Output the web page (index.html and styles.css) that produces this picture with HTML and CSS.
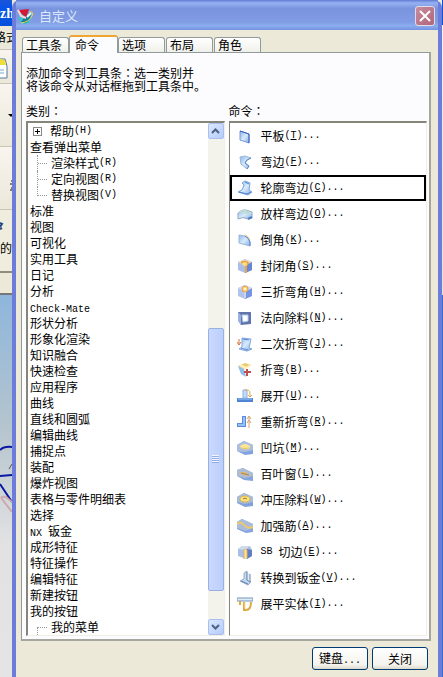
FILE: index.html
```
<!DOCTYPE html>
<html lang="zh-CN">
<head>
<meta charset="utf-8">
<meta name="viewport" content="width=device-width, initial-scale=1">
<title>自定义</title>
<link rel="stylesheet" href="styles.css">
</head>
<body>

<!-- edge of the application window behind the dialog -->
<div class="backdrop">
  <div class="back-title">zh</div>
  <div class="back-menu">格式</div>
  <div class="back-tool">
    <svg width="12" height="34" viewBox="0 0 12 34">
      <path d="M0 10H5V27H0Z" fill="#b9d3ee"/>
      <path d="M0 9L5 9L7 16V28H0" fill="#fff" stroke="#54799e"/>
      <path d="M0 9L5 10L6 15H0Z" fill="#f0dd35"/>
      <path d="M0 20H4M0 23H4" stroke="#79a4ca"/>
    </svg>
  </div>
  <div class="back-tool back-drop">
    <svg width="12" height="63" viewBox="0 0 12 63"><path d="M8 30H14L11 33Z" fill="#000"/></svg>
  </div>
  <div class="back-tool back-empty">
    <svg width="12" height="63" viewBox="0 0 12 63"><path d="M11 34H12M10 37H12M11 41H12M10 43H12" stroke="#111"/></svg>
  </div>
  <div class="back-label">
    <svg width="12" height="30" viewBox="0 0 12 30"><path d="M0 13L2 14L0 17M0 19L2 18" stroke="#234a80" stroke-width="2" fill="none"/></svg>
    <span>的</span>
  </div>
  <div class="back-base"></div>
  <div class="back-canvas">
    <svg width="12" height="230" viewBox="0 0 12 230">
      <path d="M0 157Q4 153 12 154M0 183L12 182M0 191L12 209" stroke="#0718a2" stroke-width="2" fill="none"/>
      <path d="M9 176L12 171" stroke="#555"/>
      <path d="M12 219L2 206Q0 203 6 204L12 209" stroke="#cda9af" stroke-width="2" fill="none"/>
    </svg>
  </div>
</div>

<main class="dialog">
  <header class="titlebar">
    <svg class="logo" width="17" height="17" viewBox="0 0 17 17">
      <circle cx="8" cy="10" r="6" fill="#36c5ca"/>
      <path d="M4 14Q9 17 13 11L14 6L8 9Z" fill="#187d9b"/>
      <path d="M12 4Q17 3 15 8Q12 14 4 15" fill="none" stroke="#f4d34e"/>
      <path d="M1 2L12 1L9 10Z" fill="#d31936"/>
      <path d="M1 2L4 8L9 10" fill="none" stroke="#f8d5dc" stroke-width="2"/>
      <path d="M10 9L14 5" stroke="#e9ffff" stroke-width="2"/>
    </svg>
    <h1>自定义</h1>
    <button class="close" aria-label="关闭窗口">
      <svg width="12" height="12" viewBox="0 0 12 12"><path d="M1 1L11 11M11 1L1 11" stroke="#fff" stroke-width="2"/></svg>
    </button>
  </header>

  <div class="content">
    <div class="tabs" role="tablist">
      <button role="tab">工具条</button>
      <button role="tab" class="active" aria-selected="true">命令</button>
      <button role="tab">选项</button>
      <button role="tab">布局</button>
      <button role="tab">角色</button>
    </div>

    <section class="panel">
      <p class="hint">添加命令到工具条<span class="colon" lang="zh-TW">：</span>选一类别并<br>将该命令从对话框拖到工具条中。</p>

      <div class="lists">
        <h2>类别<span class="colon" lang="zh-TW">：</span></h2>
        <h2>命令<span class="colon" lang="zh-TW">：</span></h2>

        <div class="box categories">
          <ul class="tree">
            <li class="child parent"><i class="plus"></i>帮助<span class="en">(H)</span></li>
            <li>查看弹出菜单</li>
            <li class="child">渲染样式<span class="en">(R)</span></li>
            <li class="child">定向视图<span class="en">(R)</span></li>
            <li class="child last">替换视图<span class="en">(V)</span></li>
            <li>标准</li>
            <li>视图</li>
            <li>可视化</li>
            <li>实用工具</li>
            <li>日记</li>
            <li>分析</li>
            <li><span class="en">Check-Mate</span></li>
            <li>形状分析</li>
            <li>形象化渲染</li>
            <li>知识融合</li>
            <li>快速检查</li>
            <li>应用程序</li>
            <li>曲线</li>
            <li>直线和圆弧</li>
            <li>编辑曲线</li>
            <li>捕捉点</li>
            <li>装配</li>
            <li>爆炸视图</li>
            <li>表格与零件明细表</li>
            <li>选择</li>
            <li><span class="en">NX </span>钣金</li>
            <li>成形特征</li>
            <li>特征操作</li>
            <li>编辑特征</li>
            <li>新建按钮</li>
            <li>我的按钮</li>
            <li class="child first">我的菜单</li>
          </ul>
          <div class="scrollbar">
            <button aria-label="向上滚动"><svg width="9" height="6" viewBox="0 0 9 6"><path d="M1 5L4.500 1.500L8 5" fill="none" stroke="#4d6185" stroke-width="2"/></svg></button>
            <div class="track"><div class="thumb"><i></i></div></div>
            <button aria-label="向下滚动"><svg width="9" height="6" viewBox="0 0 9 6"><path d="M1 1L4.500 4.500L8 1" fill="none" stroke="#4d6185" stroke-width="2"/></svg></button>
          </div>
        </div>

        <ul class="box commands">
          <li>
            <svg viewBox="0 0 16 16"><path d="M3 3L12 6V15L3 12Z" fill="url(#sheet)" stroke="#6b91d8"/><path d="M3 3L12 6V15" fill="none" stroke="#2547b9"/></svg>
            平板<span class="en">(<u>T</u>)...</span></li>
          <li>
            <svg viewBox="0 0 16 16"><path d="M3 3L8 2L14 4L10 6L8 9L12 12L10 15L4 10Z" fill="url(#sheet)" stroke="#8fb0d4"/><path d="M14 4L10 6L8 9L12 12L10 15" fill="none" stroke="#427bc5"/></svg>
            弯边<span class="en">(<u>F</u>)...</span></li>
          <li class="selected">
            <svg viewBox="0 0 16 16"><path d="M5 3L8 1L13 3L12 10L15 12L11 15L1 12L5 10L7 5Z" fill="url(#sheet)" stroke="#6f9ddd"/><path d="M8 2L12 4M2 12L10 14L14 12" fill="none" stroke="#3972cd"/></svg>
            轮廓弯边<span class="en">(<u>C</u>)...</span></li>
          <li>
            <svg viewBox="0 0 16 16"><path d="M1 7Q5 3 9 4L15 6V12L11 13Q6 10 1 13Z" fill="url(#sheet)" stroke="#859fbb"/><path d="M1 7Q6 5 11 9L15 7L9 4Q4 3 1 7" fill="#b9d8d3"/><path d="M11 13L15 11" stroke="#3e6fc4" stroke-width="2"/></svg>
            放样弯边<span class="en">(<u>O</u>)...</span></li>
          <li>
            <svg viewBox="0 0 16 16"><path d="M2 3L8 4Q12 6 13 10V14L2 11Z" fill="url(#sheet)" stroke="#8eafd9"/><path d="M8 4Q12 6 13 10V14" fill="none" stroke="#406ed0"/><path d="M8 3Q12 4 13 8" fill="none" stroke="#e9cd77"/></svg>
            倒角<span class="en">(<u>K</u>)...</span></li>
          <li>
            <svg viewBox="0 0 16 16"><path d="M1 4L8 1L15 4V12L8 15L1 12Z" fill="#a3b7e6"/><path d="M1 4L8 1L15 4L8 8Z" fill="#dfdcd3"/><path d="M8 8L15 4V12L8 15Z" fill="#5679d7"/><path d="M4 5Q8 2 11 5L9 8V15" fill="none" stroke="#e99a2b" stroke-width="2"/><circle cx="8" cy="6" r="2" fill="#ffdc67"/></svg>
            封闭角<span class="en">(<u>S</u>)...</span></li>
          <li>
            <svg viewBox="0 0 16 16"><path d="M1 4L8 1L15 4V12L8 15L1 12Z" fill="#a9bdee"/><path d="M8 8L15 4V12L8 15Z" fill="#6689e3"/><path d="M1 4L8 1L15 4L8 8Z" fill="#d0d7e5"/><circle cx="8" cy="5" r="3" fill="#ffd467" stroke="#e1943e"/><circle cx="8" cy="5" r="1" fill="#fff"/><path d="M8 8V14" stroke="#cbd1d9" stroke-width="2"/></svg>
            三折弯角<span class="en">(<u>H</u>)...</span></li>
          <li>
            <svg viewBox="0 0 16 16"><path d="M1 2H14V14L4 15L1 10Z" fill="#5066a4"/><path d="M1 2L4 5V15L1 11Z" fill="#91a9dc"/><path d="M5 5H11V11L6 12Z" fill="#fff" stroke="#b1c4ed"/></svg>
            法向除料<span class="en">(<u>N</u>)...</span></li>
          <li>
            <svg viewBox="0 0 16 16"><path d="M5 2L14 3L12 12L15 13L10 15L2 13L5 11Z" fill="url(#sheet)" stroke="#6e9ede"/><path d="M2 3V9M0 6L2 9L4 6" fill="none" stroke="#d3682f"/><path d="M6 3L12 4M4 12L11 14" stroke="#4a7bd0"/></svg>
            二次折弯<span class="en">(<u>J</u>)...</span></li>
          <li>
            <svg viewBox="0 0 16 16"><path d="M1 4L8 1L14 3L7 7Z" fill="#eec361"/><path d="M1 4L7 7L9 15L4 12Z" fill="#82b8e8"/><path d="M3 3L9 6L14 3" fill="none" stroke="#fff2bd" stroke-width="2"/><path d="M10 7V14M7 10H14" stroke="#bb3c38" stroke-width="2"/></svg>
            折弯<span class="en">(<u>B</u>)...</span></li>
          <li>
            <svg viewBox="0 0 16 16"><path d="M0 10H16V14H0Z" fill="#3e76d0"/><path d="M1 11H15" stroke="#89c4fa"/><path d="M6 2H10V10H6Z" fill="#b6dafa" stroke="#86a6d7"/><path d="M8 2Q13 1 13 6V9M11 7L13 9L15 7" fill="none" stroke="#dda13b"/></svg>
            展开<span class="en">(<u>U</u>)...</span></li>
          <li>
            <svg viewBox="0 0 16 16"><path d="M0 9H5V2H9V13H0Z" fill="#4d7fdc"/><path d="M6 3H8V12H1V10H6Z" fill="#8abcf0"/><path d="M12 2V14M10 5L12 2L14 5M10 9L12 6L14 9" fill="none" stroke="#d39b62"/></svg>
            重新折弯<span class="en">(<u>R</u>)...</span></li>
          <li>
            <svg viewBox="0 0 16 16"><path d="M0 5L7 1L16 5V14L8 15L0 11Z" fill="#7599de"/><path d="M0 5L7 1L16 5V10L8 12L0 11Z" fill="#a4b9d9"/><path d="M3 6Q8 2 13 6L12 9Q7 10 4 8Z" fill="#ffe486"/><path d="M4 8Q8 9 12 8" stroke="#e8c15a" fill="none"/></svg>
            凹坑<span class="en">(<u>M</u>)...</span></li>
          <li>
            <svg viewBox="0 0 16 16"><path d="M0 4L6 2L16 7V15L7 14L0 10Z" fill="#799cdb"/><path d="M0 4L6 2L16 7V10L8 12L0 10Z" fill="#a5b6cf"/><path d="M2 6L8 6L14 10L6 9Z" fill="#e8b34e"/><path d="M4 7L12 9" stroke="#8d7a70"/></svg>
            百叶窗<span class="en">(<u>L</u>)...</span></li>
          <li>
            <svg viewBox="0 0 16 16"><path d="M0 5L7 1L16 5V14L8 15L0 11Z" fill="#7497d9"/><path d="M0 5L7 1L16 5V10L8 12L0 10Z" fill="#a1b4d2"/><ellipse cx="8" cy="7" rx="5" ry="3" fill="#ffe36f" stroke="#dfad39"/><path d="M6 7Q8 5 10 7" stroke="#8b681e" fill="none"/></svg>
            冲压除料<span class="en">(<u>W</u>)...</span></li>
          <li>
            <svg viewBox="0 0 16 16"><path d="M0 4L5 1L16 6V14L9 15L0 11Z" fill="#789bdd"/><path d="M0 4L5 1L16 6V10L9 13L0 10Z" fill="#a1b5d8"/><path d="M0 6Q4 3 7 7T16 9" fill="none" stroke="#edc35c" stroke-width="2"/></svg>
            加强筋<span class="en">(<u>A</u>)...</span></li>
          <li>
            <svg viewBox="0 0 16 16"><path d="M1 5L5 2L13 2L15 6V12L9 15L1 12Z" fill="#a0b8e6"/><path d="M1 5L5 2L13 2L8 6Z" fill="#cbd9e9"/><path d="M10 5L15 6V12L10 15Z" fill="#4f72bd"/><path d="M7 15V6Q9 3 10 7V14" fill="#ffe58f" stroke="#e6a542"/></svg>
            <span class="en">SB </span>切边<span class="en">(<u>E</u>)...</span></li>
          <li>
            <svg viewBox="0 0 16 16"><path d="M7 3L10 1V10L14 12L11 15L3 11L7 9Z" fill="#bdd4e8" stroke="#8fa5c4"/><path d="M10 2V10L13 12V4" fill="#dfeaf4" stroke="#5f7cab"/><path d="M4 11L11 14" stroke="#4a74b5"/></svg>
            转换到钣金<span class="en">(<u>V</u>)...</span></li>
          <li>
            <svg viewBox="0 0 16 16"><path d="M0 2H16V5H0Z" fill="#dce9f4" stroke="#698db9"/><path d="M3 5V9M7 6V14H9Q14 14 14 6" fill="none" stroke="#dba330" stroke-width="2"/><path d="M8 6V12" stroke="#ffe585"/></svg>
            展平实体<span class="en">(<u>I</u>)...</span></li>
        </ul>
      </div>
    </section>

    <footer class="actions">
      <button>键盘<span class="en">...</span></button>
      <button>关闭</button>
    </footer>
  </div>
</main>

<div class="right-edge"></div>

<!-- shared fill for the sheet metal icons -->
<svg class="defs" width="0" height="0">
  <linearGradient id="sheet" x1="0" y1="0" x2="1" y2="1">
    <stop offset="0" stop-color="#7facea"/>
    <stop offset="0.5" stop-color="#d4e8fa"/>
    <stop offset="1" stop-color="#7ba4e5"/>
  </linearGradient>
</svg>

</body>
</html>
```
FILE: styles.css
```
* {
  box-sizing: border-box;
}

body {
  display: grid;
  grid-template-columns: 12px 1fr 1px;
  min-height: 100vh;
  margin: 0;
  overflow: hidden;
  background: #ece9d8;
  color: #000;
  font: 12px/16px "Noto Sans CJK SC", sans-serif;
}

button {
  padding: 0;
  color: #000;
  font: inherit;
}

h1, h2, p, ul {
  margin: 0;
  padding: 0;
  font-size: 12px;
  font-weight: normal;
}

ul {
  list-style: none;
}

svg {
  display: block;
  flex: none;
}

/* half width latin letters next to the full width ones */
.en {
  font: 10px/12px "Liberation Mono", monospace;
  white-space: pre;
}

/* colon in the middle of its cell */
.colon {
  font-family: "Noto Sans CJK TC", sans-serif;
}

.defs {
  position: absolute;
}

/* window behind */
.backdrop {
  display: flex;
  flex-direction: column;
  overflow: hidden;
  white-space: nowrap;
}

.back-title {
  height: 26px;
  background: linear-gradient(#1c55d8, #0754e8 30%, #0750dc);
  color: #fff;
  font: bold 14px/27px "Liberation Serif", serif;
}

.back-menu {
  height: 24px;
  border-bottom: 1px solid #c9c6b8;
  text-indent: -6px;
  line-height: 22px;
}

.back-tool {
  height: 34px;
  border-bottom: 1px solid #c9c6b8;
  background: linear-gradient(#f7f5ee, #ebe8da);
}

.back-drop,
.back-empty {
  height: 63px;
}

.back-label {
  height: 63px;
  background: #efedde;
  border-bottom: 2px solid #8f8d80;
}

.back-base {
  height: 22px;
  border-bottom: 2px solid #777;
}

.back-canvas {
  flex: 1;
  background: linear-gradient(#8eb6dc, #b5c5ce 35%, #e2e2e2 65%, #e4e4e4);
}

.back-canvas svg {
  margin-top: -2px;
}

.right-edge {
  background: linear-gradient(#0d50d8 25px, #f3f0e5 25px, #e4e1d5 295px, #406ad4 295px);
}

/* dialog */
.dialog {
  display: flex;
  flex-direction: column;
  min-width: 0;
  border: solid #6b7cdb;
  border-width: 0 4px;
  border-radius: 8px 8px 0 0;
}

.titlebar {
  display: flex;
  align-items: center;
  gap: 5px;
  height: 30px;
  padding: 2px 3px 0 1px;
  background: linear-gradient(#617bd2, #97b2f3 10%, #7a94df 28%, #819de4 75%, #8baef0 85%, #7493df);
}

.titlebar h1 {
  flex: 1;
  color: #dce7fc;
  font-size: 13px;
}

.close {
  display: grid;
  place-items: center;
  width: 20px;
  height: 20px;
  border: 1px solid #e1dbea;
  border-radius: 3px;
  background: linear-gradient(135deg, #c68d9d, #af6679);
}

.content {
  flex: 1;
  padding: 5px 7px 8px 5px;
  background: #ece9d8;
}

.tabs {
  display: flex;
  align-items: flex-end;
  height: 17px;
  gap: 1px;
  padding-left: 1px;
}

.tabs button {
  width: 47px;
  height: 15px;
  padding-left: 3px;
  border: 1px solid #919b9c;
  border-bottom: 0;
  border-radius: 3px 3px 0 0;
  background: linear-gradient(#fff, #f0f0ea);
  line-height: 14px;
  text-align: left;
}

.tabs .active {
  z-index: 1;
  width: 49px;
  height: 18px;
  margin: 0 -1px -1px;
  padding-left: 5px;
  border-top: 2px solid #efa434;
  background: #fcfcfe;
}

.panel {
  padding: 13px 2px 3px 4px;
  border: 1px solid #919b9c;
  border-right: 2px solid #a5a69e;
  border-bottom: 2px solid #a5a69e;
  background: #fcfcfe;
}

.hint {
  line-height: 13px;
}

.lists {
  display: grid;
  grid-template-columns: 1fr 1fr;
  column-gap: 4px;
  margin-top: 9px;
}

.lists h2 {
  height: 20px;
  line-height: 20px;
}

.box {
  border: 1px solid #f1efe2;
  border-top: 2px solid #85857a;
  border-left: 2px solid #85857a;
  background: #fff;
}

.categories {
  display: flex;
}

.tree {
  flex: 1;
  padding-left: 2px;
}

.tree li {
  height: 16px;
  line-height: 16px;
  white-space: nowrap;
}

.tree .child {
  display: flex;
  align-items: center;
}

/* dotted branch lines */
.child::before {
  content: "";
  align-self: flex-start;
  width: 9px;
  height: 8px;
  margin: 0 4px 0 7px;
  border-left: 1px dotted #999;
  border-bottom: 1px dotted #999;
}

.child:not(.last):not(.parent)::before {
  height: 16px;
  border-bottom: 0;
  background: repeating-linear-gradient(90deg, #999 0 1px, transparent 1px 2px) 0 8px / 100% 1px no-repeat;
}

.child.first::before {
  align-self: flex-end;
  height: 8px !important;
  background-position: 0 0 !important;
}

.tree .parent::before {
  display: none;
}

.plus {
  width: 9px;
  height: 9px;
  margin: 0 8px 0 3px;
  border: 1px solid #888;
  background:
    linear-gradient(#000, #000) center / 5px 1px no-repeat,
    linear-gradient(#000, #000) center / 1px 5px no-repeat,
    #fff;
}

.scrollbar {
  display: flex;
  flex-direction: column;
  width: 16px;
  background: #f3f2eb;
}

.scrollbar button {
  display: grid;
  place-items: center;
  height: 16px;
  border: 1px solid #a8bff1;
  border-radius: 2px;
  background: linear-gradient(135deg, #dbe7ff, #b5cbf8);
}

.track {
  display: flex;
  flex-direction: column;
  flex: 1;
}

.track::before {
  content: "";
  flex: 189;
}

.track::after {
  content: "";
  flex: 28;
}

.thumb {
  display: grid;
  place-items: center;
  flex: 262;
  border: 1px solid #98b1e4;
  border-radius: 2px;
  background: linear-gradient(90deg, #cad8fd, #bccffb);
}

.thumb i {
  width: 7px;
  height: 8px;
  background: repeating-linear-gradient(#f0f5ff 0 1px, #91aeea 1px 2px);
}

.box.commands {
  border-left-width: 1px;
}

.commands li {
  display: flex;
  align-items: center;
  height: 26px;
  padding-left: 7px;
  white-space: nowrap;
}

.commands svg {
  width: 16px;
  height: 16px;
  margin-right: 8px;
  opacity: 0.9;
}

.commands .selected {
  padding-left: 5px;
  border: 2px solid #000;
}

.actions {
  display: flex;
  justify-content: flex-end;
  gap: 4px;
  padding: 6px 3px 0;
}

.actions button {
  width: 56px;
  height: 23px;
  border: 1px solid #003c74;
  border-radius: 3px;
  background: linear-gradient(#fff, #f4f3ed 80%, #dcd8cb);
}
```
